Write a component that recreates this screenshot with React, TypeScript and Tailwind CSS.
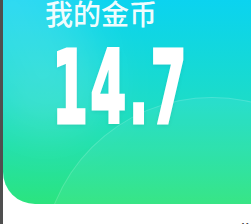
import React from "react";

export default function App() {
  return (
    <div className="flex h-[224px] w-[251px] overflow-hidden bg-white">
      <div className="w-[3px] shrink-0 bg-[#4f4f4f]" />
      <div className="flex flex-1 flex-col">
        <div className="relative h-[204px] shrink-0 overflow-hidden rounded-bl-[32px] bg-gradient-to-b from-[#0bd3f0] via-[#1cdcc8] to-[#2ce47e]">
          {/* soft highlight top-left */}
          <div className="absolute -left-[30px] -top-[60px] h-[200px] w-[110px] rotate-[-25deg] rounded-full bg-white/15 blur-xl" />
          {/* big circle */}
          <div className="absolute left-[39px] top-[97px] h-[340px] w-[340px] rounded-full border border-white/15 bg-white/[0.06]" />
          <div className="relative pl-[42px]">
            <div
              className="-mt-[1px] text-[28px] font-medium leading-[28px] text-white/95"
              style={{ fontFamily: '"Noto Sans CJK SC", sans-serif' }}
            >
              我的金币
            </div>
            <div
              className="mt-[19px] ml-[7px] origin-left scale-x-[0.57] text-[101px] font-bold leading-[84px] tracking-[4px] text-white [-webkit-text-stroke:3px_white] [text-shadow:0_2px_6px_rgba(0,80,80,0.15)]"
              style={{ fontFamily: '"DejaVu Sans Condensed", "DejaVu Sans", sans-serif' }}
            >
              14.7
            </div>
          </div>
        </div>
        <div className="flex justify-end pr-[10px] pt-[16px]">
          <span
            className="text-[16px] font-bold leading-[20px] text-black"
            style={{ fontFamily: '"Noto Sans CJK SC", sans-serif' }}
          >
            赚金币
          </span>
        </div>
      </div>
    </div>
  );
}
